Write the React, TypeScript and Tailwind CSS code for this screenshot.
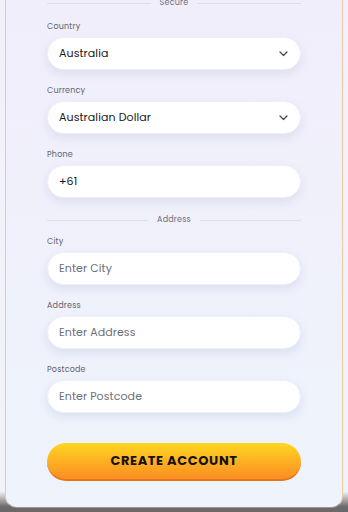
import React from 'react';

const font = { fontFamily: 'Poppins, Inter, "Noto Sans", sans-serif' };

function Divider({ label }: { label: string }) {
  return (
    <div className="flex items-center gap-[9px]">
      <div className="h-px flex-1 bg-[#dcdeec]" />
      <span className="text-[8px] leading-[10px] text-[#6b6f7b] tracking-[0.2px]">{label}</span>
      <div className="h-px flex-1 bg-[#dcdeec]" />
    </div>
  );
}

function Field({
  label,
  value,
  placeholder,
  select,
}: {
  label: string;
  value?: string;
  placeholder?: string;
  select?: boolean;
}) {
  return (
    <div className="flex flex-col">
      <label className="mb-[5px] text-[8px] leading-[10px] text-[#5f6370] tracking-[0.2px]">{label}</label>
      <div className="flex h-[33px] items-center justify-between rounded-full border border-[#eef0f8] bg-white pl-[11px] pr-[12px] shadow-[0_4px_10px_rgba(140,150,200,0.2)]">
        {value ? (
          <span className="text-[11px] text-[#16181d] tracking-[0.1px]">{value}</span>
        ) : (
          <span className="text-[11px] text-[#6b6e78] tracking-[0.1px]">{placeholder}</span>
        )}
        {select && (
          <svg width="9" height="6" viewBox="0 0 9 6" fill="none">
            <path d="M1 1l3.5 3.5L8 1" stroke="#4b4f5c" strokeWidth="1.4" strokeLinecap="round" strokeLinejoin="round" />
          </svg>
        )}
      </div>
    </div>
  );
}

export default function App() {
  return (
    <div
      className="relative h-[512px] w-[348px] overflow-hidden bg-[linear-gradient(to_bottom,#f4f0fa_0%,#f1f3f9_96%,#6a6868_99%)]"
      style={font}
    >
      <div className="mx-[5px] mt-[-19px] flex h-[527px] flex-col rounded-b-[12px] border border-[#ecc7a8] border-b-[#a3968f] bg-[linear-gradient(to_bottom,#f1eefb_0%,#f0f0fb_40%,#eef4fb_100%)] px-[41px] pt-[16px]">
        <Divider label="Secure" />
        <div className="mt-[14px] flex flex-col gap-[16px]">
          <Field label="Country" value="Australia" select />
          <Field label="Currency" value="Australian Dollar" select />
          <Field label="Phone" value="+61" />
        </div>
        <div className="mt-[17px]">
          <Divider label="Address" />
        </div>
        <div className="mt-[12px] flex flex-col gap-[16px]">
          <Field label="City" placeholder="Enter City" />
          <Field label="Address" placeholder="Enter Address" />
          <Field label="Postcode" placeholder="Enter Postcode" />
        </div>
        <button
          type="button"
          className="mt-[30px] flex h-[38px] w-full items-center justify-center rounded-full border-b-2 border-[#e9731c] bg-[linear-gradient(to_bottom,#fed71f_0%,#fdb123_50%,#fb8e22_100%)] text-[13px] font-bold tracking-[0.6px] text-[#16120e]"
        >
          CREATE ACCOUNT
        </button>
      </div>
    </div>
  );
}
